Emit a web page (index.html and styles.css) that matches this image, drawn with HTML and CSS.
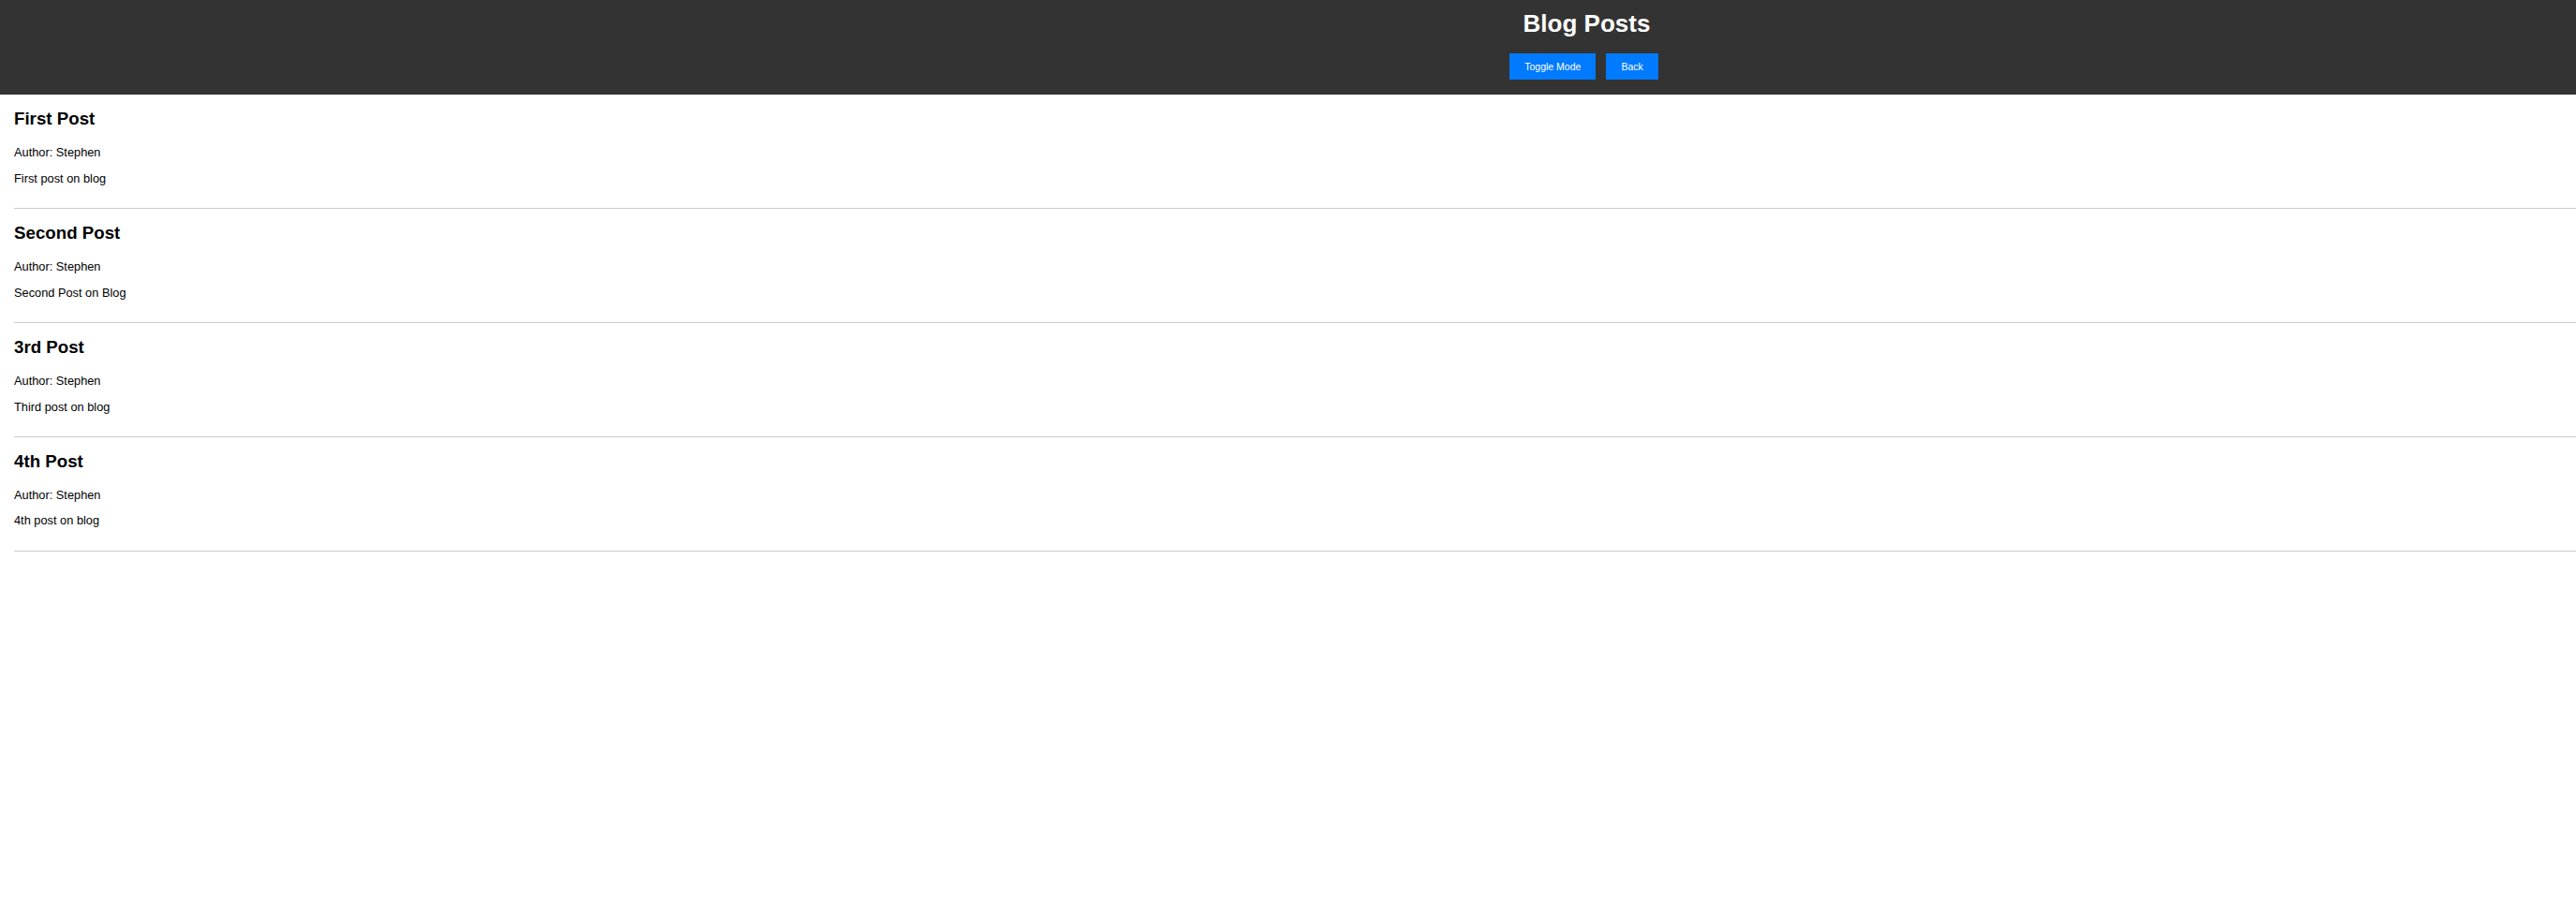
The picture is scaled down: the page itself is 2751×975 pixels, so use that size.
FILE: index.html
```html
<!DOCTYPE html>
<html lang="en">
<head>
<meta charset="utf-8">
<title>Blog Posts</title>
<link rel="stylesheet" href="styles.css">
</head>
<body>
<header class="site-header">
  <h1 class="site-title">Blog Posts</h1>
  <div class="header-actions">
    <button class="btn">Toggle Mode</button>
    <button class="btn">Back</button>
  </div>
</header>
<main class="posts">
  <article class="post">
    <h3 class="post-title">First Post</h3>
    <p class="post-meta">Author: Stephen</p>
    <p class="post-body">First post on blog</p>
  </article>
  <article class="post">
    <h3 class="post-title">Second Post</h3>
    <p class="post-meta">Author: Stephen</p>
    <p class="post-body">Second Post on Blog</p>
  </article>
  <article class="post">
    <h3 class="post-title">3rd Post</h3>
    <p class="post-meta">Author: Stephen</p>
    <p class="post-body">Third post on blog</p>
  </article>
  <article class="post">
    <h3 class="post-title">4th Post</h3>
    <p class="post-meta">Author: Stephen</p>
    <p class="post-body">4th post on blog</p>
  </article>
</main>
</body>
</html>
```

FILE: styles.css
```css
html, body {
  margin: 0;
  padding: 0;
  background: #ffffff;
  font-family: "Liberation Sans", Arial, sans-serif;
  font-size: 16px;
  color: #000000;
}

.site-header {
  background: #333333;
  height: 101px;
  box-sizing: border-box;
  padding: 11px 0 0 632px;
  display: flex;
  flex-direction: column;
  align-items: center;
}

.site-title {
  margin: 0 0 17px;
  padding-left: 6px;
  font-size: 26px;
  font-weight: bold;
  color: #ffffff;
  line-height: 29px;
}

.header-actions {
  display: flex;
  gap: 11px;
}

.btn {
  height: 28px;
  padding: 0 16px;
  border: none;
  background: #007bff;
  color: #ffffff;
  font-family: "Liberation Sans", Arial, sans-serif;
  font-size: 10.5px;
  line-height: 28px;
  cursor: pointer;
}

.posts {
  margin-left: 15px;
}

.post {
  border-bottom: 1px solid #cccccc;
  padding: 15px 0 10.5px;
}

.post-title {
  margin: 0 0 18.5px;
  font-size: 18.72px;
  font-weight: bold;
  line-height: 21.5px;
}

.post-meta,
.post-body {
  margin: 0 0 13px;
  font-size: 12.8px;
  line-height: 14.7px;
}
```
